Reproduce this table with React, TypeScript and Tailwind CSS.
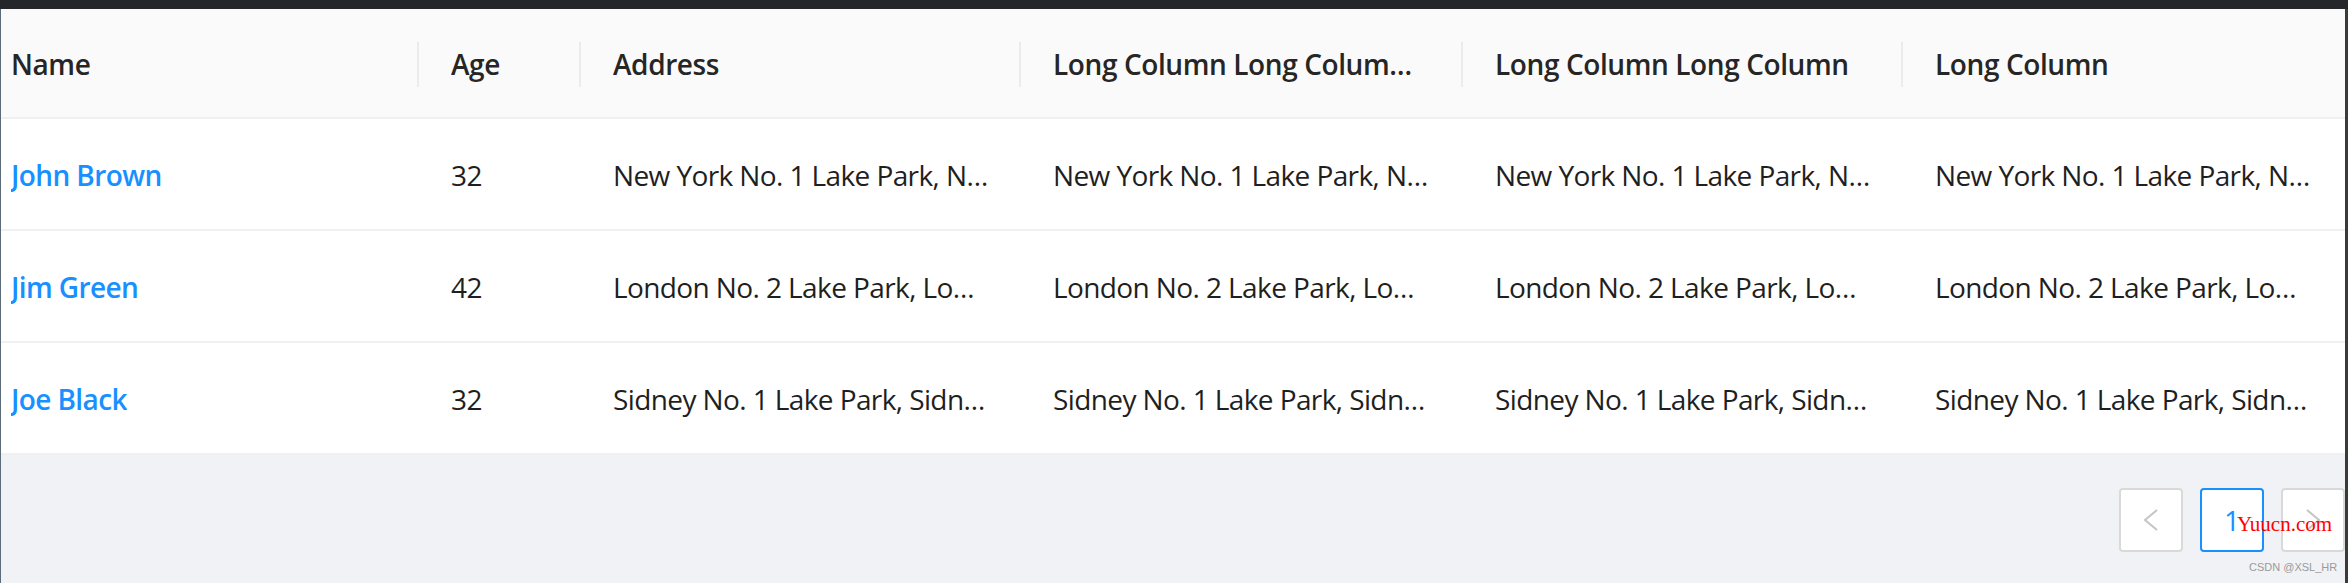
import React from "react";

const cols = "grid-cols-[418px_162px_440px_442px_440px_442px]";

const headers = [
  "Name",
  "Age",
  "Address",
  "Long Column Long Column Long Column",
  "Long Column Long Column",
  "Long Column",
];

const rows = [
  { name: "John Brown", age: "32", addr: "New York No. 1 Lake Park, New York No. 1 Lake Park" },
  { name: "Jim Green", age: "42", addr: "London No. 2 Lake Park, London No. 2 Lake Park" },
  { name: "Joe Black", age: "32", addr: "Sidney No. 1 Lake Park, Sidney No. 1 Lake Park" },
];

function Chevron({ dir }: { dir: "left" | "right" }) {
  return (
    <svg width="16" height="22" viewBox="0 0 16 22" fill="none">
      {dir === "left" ? (
        <polyline points="14,1 2,11 14,21" stroke="#c4c4c4" strokeWidth="2" />
      ) : (
        <polyline points="2,1 14,11 2,21" stroke="#c4c4c4" strokeWidth="2" />
      )}
    </svg>
  );
}

export default function App() {
  return (
    <div
      className="relative w-[2348px] h-[583px] overflow-hidden flex flex-col bg-[#f0f2f5]"
      style={{ fontFamily: '"Open Sans", "Noto Sans", sans-serif' }}
    >
      <div className="h-[9px] shrink-0 bg-[#25262a]" />
      <div className="flex-1 flex flex-col border-l border-[#5c6b7a] border-r-[3px] border-r-[#3a3a3a]">
        {/* header */}
        <div className={`grid ${cols} h-[110px] pt-[2px] bg-[#fafafa] border-b-2 border-[#f0f0f0]`}>
          {headers.map((h, i) => (
            <div
              key={h}
              className={`flex items-center min-w-0 ${i === 0 ? "pl-[10px]" : "pl-[32px]"}`}
            >
              <span className="flex-1 min-w-0 truncate text-[28px] font-semibold tracking-[-0.4px] text-[#262626] pr-[38px]">
                {h}
              </span>
              {i < headers.length - 1 ? (
                <div className="w-[2px] h-[45px] shrink-0 bg-[#ebebeb]" />
              ) : null}
            </div>
          ))}
        </div>
        {/* body */}
        {rows.map((r) => (
          <div key={r.name} className={`grid ${cols} h-[112px] pt-[2px] bg-white border-b-2 border-[#f0f0f0]`}>
            <div className="flex items-center pl-[10px] min-w-0">
              <span className="truncate text-[28px] font-semibold tracking-[-0.6px] text-[#1890ff]">{r.name}</span>
            </div>
            <div className="flex items-center pl-[32px] pr-[32px] min-w-0">
              <span className="truncate text-[28px] tracking-[-0.6px] text-[#1f1f1f]">{r.age}</span>
            </div>
            {[0, 1, 2, 3].map((k) => (
              <div
                key={k}
                className={`flex items-center pl-[32px] min-w-0 ${k % 2 === 0 ? "pr-[31px]" : "pr-[33px]"}`}
              >
                <span className="truncate text-[28px] tracking-[-0.6px] text-[#1f1f1f]">{r.addr}</span>
              </div>
            ))}
          </div>
        ))}
        {/* pagination */}
        <div className="flex justify-end gap-[17px] pt-[33px]">
          <div className="w-[64px] h-[64px] rounded-[4px] border-2 border-[#d9d9d9] bg-white flex items-center justify-center">
            <Chevron dir="left" />
          </div>
          <div className="w-[64px] h-[64px] rounded-[4px] border-2 border-[#1890ff] bg-white flex items-center justify-center text-[28px] text-[#1890ff]">
            1
          </div>
          <div className="w-[64px] h-[64px] rounded-[4px] border-2 border-[#d9d9d9] bg-white flex items-center justify-center">
            <Chevron dir="right" />
          </div>
        </div>
      </div>
      {/* watermarks */}
      <div
        className="absolute left-[2237px] top-[514px] text-[21px] leading-none text-[#ff0000]"
        style={{ fontFamily: '"Liberation Serif", serif' }}
      >
        Yuucn.com
      </div>
      <div
        className="absolute left-[2249px] top-[562px] text-[11px] leading-none text-[#9a9a9a]"
        style={{ fontFamily: '"Liberation Sans", sans-serif' }}
      >
        CSDN @XSL_HR
      </div>
    </div>
  );
}
